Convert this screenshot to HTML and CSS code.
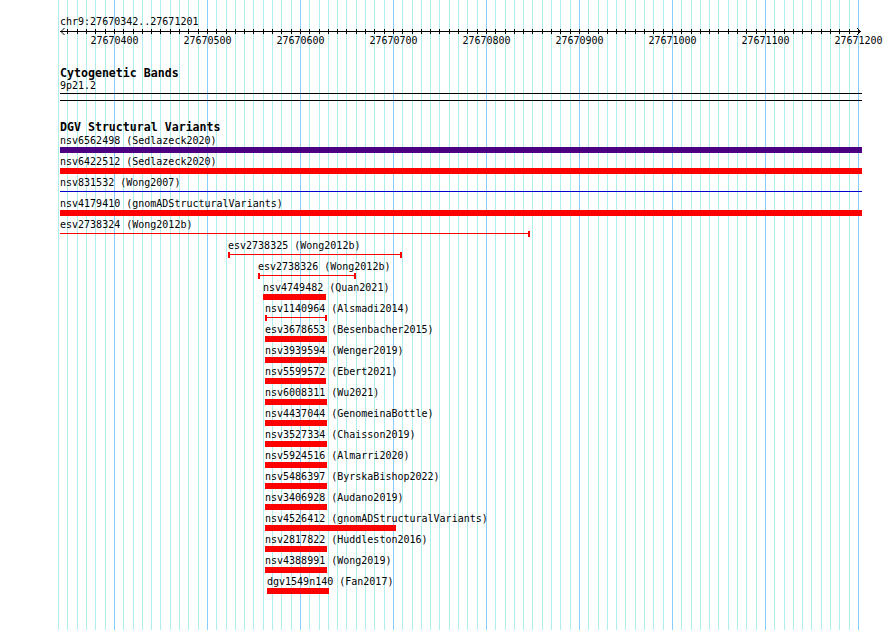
FILE: index.html
```html
<!DOCTYPE html>
<html lang="en">
<head>
  <meta charset="UTF-8" />
  <title>chr9:27670342..27671201</title>
  <link rel="stylesheet" href="styles.css">
</head>
<body>
  <div class="browser">
    <svg class="grid" id="grid" width="890" height="630"></svg>

    <div class="tracks">
      <div class="locus">chr9:27670342..27671201</div>
      <svg class="ruler" id="ruler" width="830" height="20"></svg>

      <section class="track">
        <h3 class="track-title">Cytogenetic Bands</h3>
        <div class="band-label">9p21.2</div>
        <div class="band"></div>
      </section>

      <section class="track">
        <h3 class="track-title">DGV Structural Variants</h3>
        <div class="features">
          <div class="feature"><div class="label">nsv6562498 (Sedlazeck2020)</div><div class="glyph bar purple" style="width:802px"></div></div>
          <div class="feature"><div class="label">nsv6422512 (Sedlazeck2020)</div><div class="glyph bar red" style="width:802px"></div></div>
          <div class="feature"><div class="label">nsv831532 (Wong2007)</div><div class="glyph line open blue" style="width:802px"></div></div>
          <div class="feature"><div class="label">nsv4179410 (gnomADStructuralVariants)</div><div class="glyph bar red" style="width:802px"></div></div>
          <div class="feature"><div class="label">esv2738324 (Wong2012b)</div><div class="glyph line open-left red" style="width:470px"></div></div>
          <div class="feature" style="margin-left:168px"><div class="label">esv2738325 (Wong2012b)</div><div class="glyph line red" style="width:174px"></div></div>
          <div class="feature" style="margin-left:198px"><div class="label">esv2738326 (Wong2012b)</div><div class="glyph line red" style="width:98px"></div></div>
          <div class="feature" style="margin-left:203px"><div class="label">nsv4749482 (Quan2021)</div><div class="glyph bar red" style="width:63px"></div></div>
          <div class="feature" style="margin-left:205px"><div class="label">nsv1140964 (Alsmadi2014)</div><div class="glyph line red" style="width:62px"></div></div>
          <div class="feature" style="margin-left:205px"><div class="label">esv3678653 (Besenbacher2015)</div><div class="glyph bar red" style="width:62px"></div></div>
          <div class="feature" style="margin-left:205px"><div class="label">nsv3939594 (Wenger2019)</div><div class="glyph bar red" style="width:62px"></div></div>
          <div class="feature" style="margin-left:205px"><div class="label">nsv5599572 (Ebert2021)</div><div class="glyph bar red" style="width:61px"></div></div>
          <div class="feature" style="margin-left:205px"><div class="label">nsv6008311 (Wu2021)</div><div class="glyph bar red" style="width:62px"></div></div>
          <div class="feature" style="margin-left:205px"><div class="label">nsv4437044 (GenomeinaBottle)</div><div class="glyph bar red" style="width:62px"></div></div>
          <div class="feature" style="margin-left:205px"><div class="label">nsv3527334 (Chaisson2019)</div><div class="glyph bar red" style="width:62px"></div></div>
          <div class="feature" style="margin-left:205px"><div class="label">nsv5924516 (Almarri2020)</div><div class="glyph bar red" style="width:62px"></div></div>
          <div class="feature" style="margin-left:205px"><div class="label">nsv5486397 (ByrskaBishop2022)</div><div class="glyph bar red" style="width:62px"></div></div>
          <div class="feature" style="margin-left:205px"><div class="label">nsv3406928 (Audano2019)</div><div class="glyph bar red" style="width:62px"></div></div>
          <div class="feature" style="margin-left:205px"><div class="label">nsv4526412 (gnomADStructuralVariants)</div><div class="glyph bar red" style="width:131px"></div></div>
          <div class="feature" style="margin-left:205px"><div class="label">nsv2817822 (Huddleston2016)</div><div class="glyph bar red" style="width:62px"></div></div>
          <div class="feature" style="margin-left:205px"><div class="label">nsv4388991 (Wong2019)</div><div class="glyph bar red" style="width:62px"></div></div>
          <div class="feature" style="margin-left:207px"><div class="label">dgv1549n140 (Fan2017)</div><div class="glyph bar red" style="width:62px"></div></div>
        </div>
      </section>
    </div>
  </div>

  <script>
    const SVG = "http://www.w3.org/2000/svg";
    const START = 27670342;
    const END = 27671201;
    const LEFT = 60;
    const SCALE = 0.93;

    function toX(pos) {
      return Math.round(LEFT + (pos - START) * SCALE);
    }

    function el(name, attrs) {
      const node = document.createElementNS(SVG, name);
      for (const key in attrs) node.setAttribute(key, attrs[key]);
      return node;
    }

    function drawGrid() {
      const grid = document.getElementById("grid");
      for (let pos = 27670340; pos <= 27671200; pos += 10) {
        const x = toX(pos) + 0.5;
        grid.appendChild(el("line", {
          x1: x, x2: x, y1: 0, y2: 630,
          class: pos % 100 === 0 ? "major" : "minor"
        }));
      }
    }

    function drawRuler() {
      const ruler = document.getElementById("ruler");
      const right = toX(END) + 2 - LEFT;
      ruler.appendChild(el("line", { x1: 0, x2: right, y1: 4.5, y2: 4.5 }));
      ruler.appendChild(el("polyline", { points: "4.5,1 1,4.5 4.5,8" }));
      ruler.appendChild(el("polyline", { points: `${right - 4},1 ${right - 0.5},4.5 ${right - 4},8` }));

      for (let pos = 27670350; pos <= 27671200; pos += 10) {
        const x = toX(pos) - LEFT + 0.5;
        ruler.appendChild(el("line", { x1: x, x2: x, y1: 2, y2: 7 }));
        if (pos % 100 === 0) {
          const label = el("text", { x: x, y: 17 });
          label.textContent = pos;
          ruler.appendChild(label);
        }
      }
    }

    drawGrid();
    drawRuler();
  </script>
</body>
</html>
```

FILE: styles.css
```css
* {
  margin: 0;
  padding: 0;
  box-sizing: border-box;
}

body {
  background: #fff;
  color: #000;
  font-family: "DejaVu Sans Mono", "Liberation Mono", monospace;
  font-size: 10px;
  line-height: 10px;
}

.browser {
  position: relative;
  width: 890px;
  height: 630px;
  overflow: hidden;
}

/* background guide lines, one every 10 bp */
.grid {
  position: absolute;
  top: 0;
  left: 0;
  shape-rendering: crispEdges;
}

.grid line {
  stroke-width: 1;
}

.grid .minor {
  stroke: #afeeee;
}

.grid .major {
  stroke: #87cefa;
}

.tracks {
  position: relative;
  padding: 17px 0 0 60px;
}

.locus {
  height: 10px;
  white-space: nowrap;
}

.ruler {
  display: block;
  overflow: visible;
  shape-rendering: crispEdges;
}

.ruler line,
.ruler polyline {
  stroke: #000;
  stroke-width: 1;
  fill: none;
}

.ruler polyline {
  shape-rendering: auto;
}

.ruler text {
  font-family: "DejaVu Sans Mono", "Liberation Mono", monospace;
  font-size: 10px;
  fill: #000;
  text-anchor: middle;
}

.track {
  margin-top: 20px;
}

.track-title {
  font-size: 11.6px;
  font-weight: bold;
  line-height: 12px;
  height: 12px;
  white-space: nowrap;
}

.band-label {
  margin-top: 2px;
  height: 10px;
}

.band {
  margin-top: 2px;
  width: 802px;
  height: 8px;
  border-top: 1px solid #000;
  border-bottom: 1px solid #000;
}

.features {
  margin-top: 3px;
}

.feature {
  height: 21px;
}

.label {
  height: 10px;
  white-space: nowrap;
}

.glyph {
  margin-top: 1px;
  height: 6px;
}

.bar {
  background: currentColor;
}

.line {
  border-left: 2px solid;
  border-right: 2px solid;
  background: linear-gradient(currentColor, currentColor) 0 2px / 100% 1px no-repeat;
}

.line.open-left {
  border-left: 0;
}

.line.open {
  border-left: 0;
  border-right: 0;
}

.red {
  color: #ff0000;
}

.blue {
  color: #0000cd;
}

.purple {
  color: #4b0082;
}
```
